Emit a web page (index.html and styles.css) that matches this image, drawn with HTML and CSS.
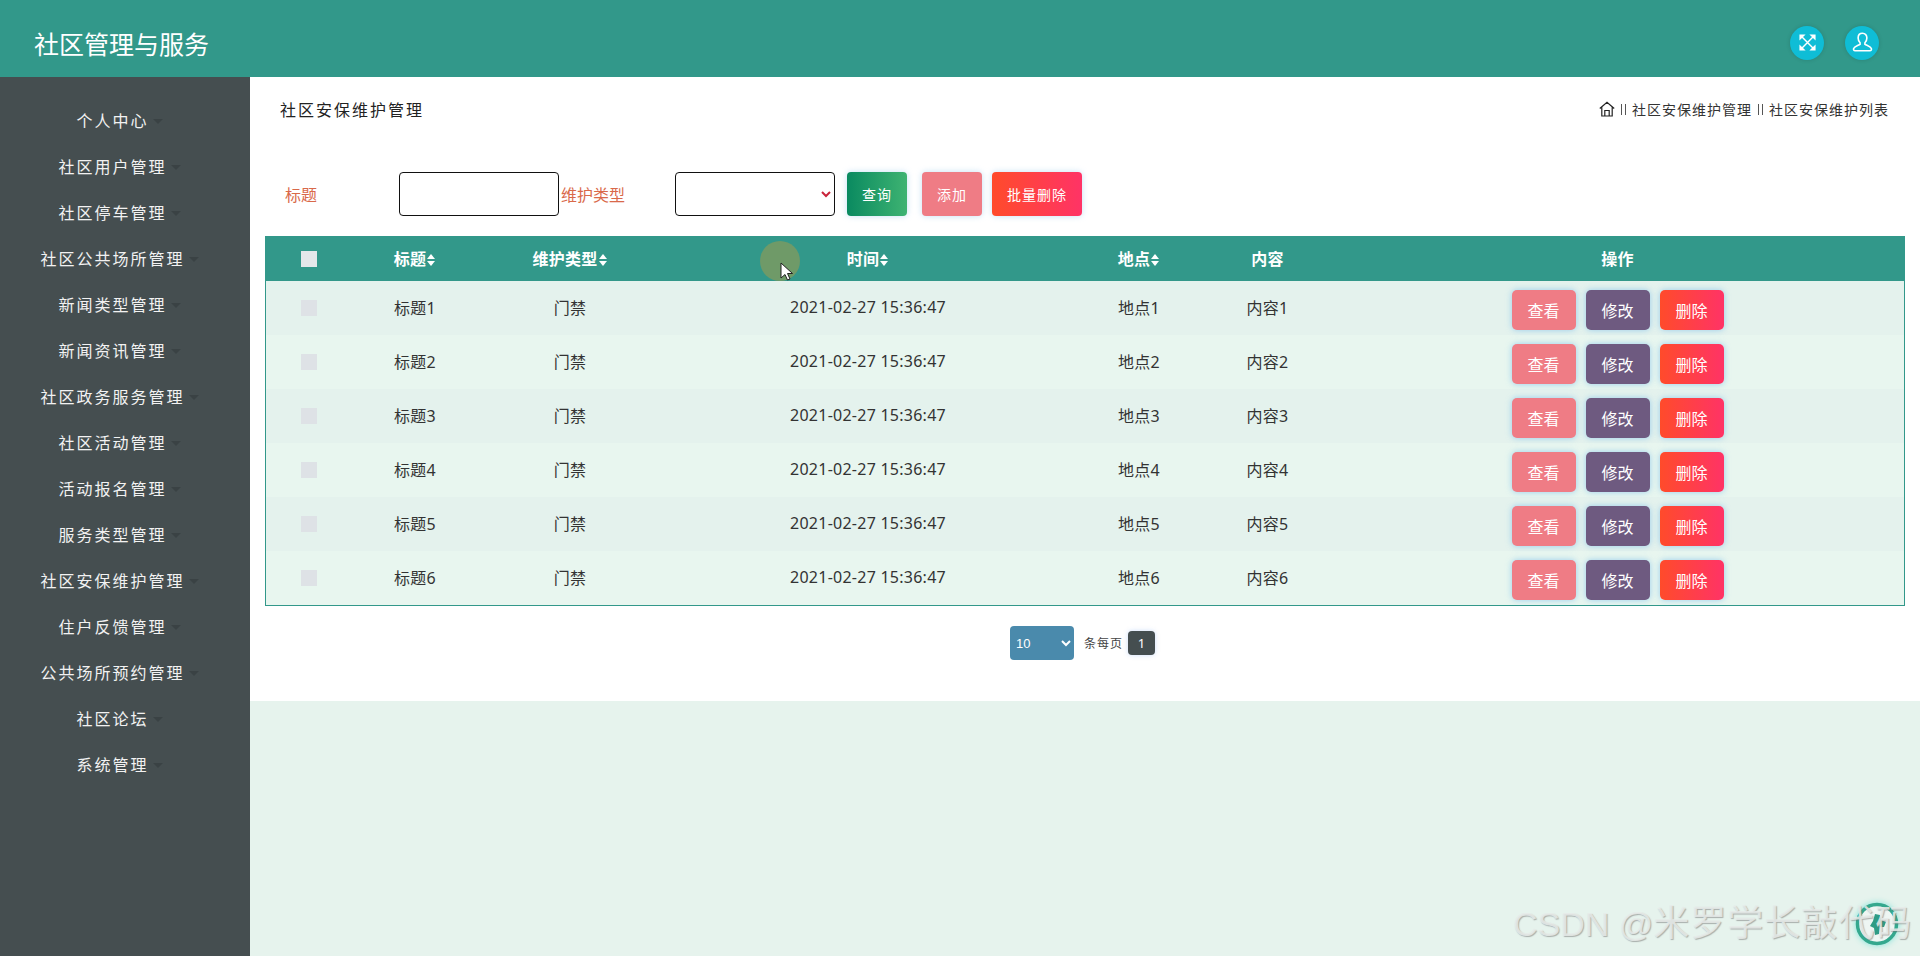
FILE: index.html
```html
<!DOCTYPE html>
<html lang="zh-CN">

<head>
    <meta charset="UTF-8">
    <meta name="viewport" content="width=device-width, initial-scale=1.0">
    <title>社区管理与服务</title>
    <link rel="stylesheet" href="styles.css">
</head>

<body>
    <header class="topbar">
        <div class="logo">社区管理与服务</div>
        <div class="top-icons">
            <span class="round-icon">
                <svg width="19" height="19" viewBox="0 0 20 20" fill="none" stroke="#fff" stroke-width="1.500">
                    <path d="M4 4l12 12M16 4L4 16" />
                    <path d="M1.500 1.500h6.500L1.500 8zM18.500 1.500V8L12 1.500zM1.500 18.500V12L8 18.500zM18.500 18.500H12L18.500 12z" fill="#fff" stroke="none" />
                </svg>
            </span>
            <span class="round-icon">
                <svg width="23" height="23" viewBox="0 0 20 20" fill="none" stroke="#fff" stroke-width="1.400">
                    <path d="M10 2c-2.400 0-3.800 1.700-3.800 4 0 1.700.7 3.200 1.700 4.200v1.300c-1.600 1-5 1.900-5.600 3.700-.3 1 .2 2 1.300 2h12.800c1.100 0 1.600-1 1.300-2-.6-1.800-4-2.700-5.600-3.700v-1.300c1-1 1.700-2.500 1.700-4.200 0-2.300-1.400-4-3.800-4z" />
                </svg>
            </span>
        </div>
    </header>

    <div class="layout">
        <!-- 左侧菜单 -->
        <nav class="sidebar">
            <a class="menu-item">个人中心</a>
            <a class="menu-item">社区用户管理</a>
            <a class="menu-item">社区停车管理</a>
            <a class="menu-item">社区公共场所管理</a>
            <a class="menu-item">新闻类型管理</a>
            <a class="menu-item">新闻资讯管理</a>
            <a class="menu-item">社区政务服务管理</a>
            <a class="menu-item">社区活动管理</a>
            <a class="menu-item">活动报名管理</a>
            <a class="menu-item">服务类型管理</a>
            <a class="menu-item">社区安保维护管理</a>
            <a class="menu-item">住户反馈管理</a>
            <a class="menu-item">公共场所预约管理</a>
            <a class="menu-item">社区论坛</a>
            <a class="menu-item">系统管理</a>
        </nav>

        <main class="main">
            <section class="panel">
                <div class="title-bar">
                    <span class="page-title">社区安保维护管理</span>
                    <div class="crumbs">
                        <svg width="16" height="16" viewBox="0 0 16 16" fill="none" stroke="#222" stroke-width="1.200">
                            <path d="M.8 7.500L8 1.200l7.200 6.300M2.800 6.200V15h10.400V6.200M5.800 15V9.500h4.400V15" />
                        </svg>
                        <span class="crumb-sep"></span>
                        <span>社区安保维护管理</span>
                        <span class="crumb-sep"></span>
                        <span>社区安保维护列表</span>
                    </div>
                </div>

                <!-- 搜索 -->
                <form class="search-row">
                    <label class="search-label">标题</label>
                    <input class="search-input" type="text">
                    <label class="search-label second">维护类型</label>
                    <select class="search-input search-select">
                        <option></option>
                    </select>
                    <button type="button" class="btn btn-search">查询</button>
                    <button type="button" class="btn btn-pink">添加</button>
                    <button type="button" class="btn btn-red btn-wide">批量删除</button>
                </form>

                <div class="table-wrap">
                    <table class="data-table">
                        <colgroup>
                            <col class="col-check">
                            <col class="col-title">
                            <col class="col-type">
                            <col class="col-time">
                            <col class="col-place">
                            <col class="col-content">
                            <col>
                        </colgroup>
                        <thead>
                            <tr>
                                <th><span class="check check-head"></span></th>
                                <th>标题<span class="sort"></span></th>
                                <th>维护类型<span class="sort"></span></th>
                                <th>时间<span class="sort"></span></th>
                                <th>地点<span class="sort"></span></th>
                                <th>内容</th>
                                <th>操作</th>
                            </tr>
                        </thead>
                        <tbody>
                            <tr>
                                <td><span class="check"></span></td>
                                <td>标题1</td>
                                <td>门禁</td>
                                <td>2021-02-27 15:36:47</td>
                                <td>地点1</td>
                                <td>内容1</td>
                                <td class="actions"><button class="act act-view">查看</button><button class="act act-edit">修改</button><button class="act act-del">删除</button></td>
                            </tr>
                            <tr>
                                <td><span class="check"></span></td>
                                <td>标题2</td>
                                <td>门禁</td>
                                <td>2021-02-27 15:36:47</td>
                                <td>地点2</td>
                                <td>内容2</td>
                                <td class="actions"><button class="act act-view">查看</button><button class="act act-edit">修改</button><button class="act act-del">删除</button></td>
                            </tr>
                            <tr>
                                <td><span class="check"></span></td>
                                <td>标题3</td>
                                <td>门禁</td>
                                <td>2021-02-27 15:36:47</td>
                                <td>地点3</td>
                                <td>内容3</td>
                                <td class="actions"><button class="act act-view">查看</button><button class="act act-edit">修改</button><button class="act act-del">删除</button></td>
                            </tr>
                            <tr>
                                <td><span class="check"></span></td>
                                <td>标题4</td>
                                <td>门禁</td>
                                <td>2021-02-27 15:36:47</td>
                                <td>地点4</td>
                                <td>内容4</td>
                                <td class="actions"><button class="act act-view">查看</button><button class="act act-edit">修改</button><button class="act act-del">删除</button></td>
                            </tr>
                            <tr>
                                <td><span class="check"></span></td>
                                <td>标题5</td>
                                <td>门禁</td>
                                <td>2021-02-27 15:36:47</td>
                                <td>地点5</td>
                                <td>内容5</td>
                                <td class="actions"><button class="act act-view">查看</button><button class="act act-edit">修改</button><button class="act act-del">删除</button></td>
                            </tr>
                            <tr>
                                <td><span class="check"></span></td>
                                <td>标题6</td>
                                <td>门禁</td>
                                <td>2021-02-27 15:36:47</td>
                                <td>地点6</td>
                                <td>内容6</td>
                                <td class="actions"><button class="act act-view">查看</button><button class="act act-edit">修改</button><button class="act act-del">删除</button></td>
                            </tr>
                        </tbody>
                    </table>
                </div>

                <!-- 分页 -->
                <div class="pager">
                    <select class="page-size">
                        <option>10</option>
                    </select>
                    <span class="page-text">条每页</span>
                    <span class="page-num">1</span>
                </div>
            </section>
        </main>
    </div>

    <!-- 录屏的鼠标高亮 -->
    <div class="cursor-dot"></div>
    <svg class="cursor-arrow" width="13" height="19" viewBox="0 0 13 19">
        <path d="M1 1v15l4-3.500 2.500 5.500 2.500-1-2.500-5.500H12.500z" fill="#fff" stroke="#222" stroke-width="1" />
    </svg>

    <svg class="float-help" width="46" height="46" viewBox="0 0 46 46">
        <circle cx="23" cy="23" r="19.500" fill="#eef6f3" stroke="#35a88e" stroke-width="3.500" />
        <path d="M21 13l5 1 1 5 5 2-2 5-4 0-1 7-4 1-1-7-4-2 3-5z" fill="#2f9c84" />
    </svg>
    <div class="watermark">CSDN @<span class="watermark-cjk">米罗学长敲代码</span></div>
</body>

</html>
```

FILE: styles.css
```css
* {
    box-sizing: border-box;
}

body {
    margin: 0;
    height: 100vh;
    overflow: hidden;
    background: #e6f3ed;
    color: #333;
    font-family: "Noto Sans", "Noto Sans CJK SC", sans-serif;
    font-size: 16px;
}

/* 顶部 */
.topbar {
    height: 77px;
    background: #32988a;
    display: flex;
    align-items: center;
    justify-content: space-between;
    padding: 10px 41px 0 34px;
    color: #fff;
}

.logo {
    font-size: 25px;
    line-height: 34px;
}

.top-icons {
    display: flex;
    gap: 21px;
    margin-top: -2px;
}

.round-icon {
    width: 34px;
    height: 34px;
    border-radius: 50%;
    background: #0fbdd6;
    box-shadow: 0 0 4px rgba(0, 0, 0, 0.15);
    display: flex;
    align-items: center;
    justify-content: center;
}

.layout {
    display: flex;
    height: 879px;
}

/* 菜单 */
.sidebar {
    width: 250px;
    flex: none;
    background: #454e50;
    padding: 21px 11px 0 0;
}

.menu-item {
    display: block;
    height: 46px;
    line-height: 46px;
    text-align: center;
    color: #f2f2f2;
    letter-spacing: 2px;
}

.menu-item::after {
    content: "";
    display: inline-block;
    margin-left: 4px;
    vertical-align: 3px;
    border-top: 5px solid #3a4244;
    border-left: 5px solid transparent;
    border-right: 5px solid transparent;
}

.main {
    flex: 1;
}

.panel {
    background: #fff;
    height: 624px;
}

.title-bar {
    height: 64px;
    display: flex;
    align-items: center;
    justify-content: space-between;
    padding: 0 31px 0 30px;
}

.page-title {
    letter-spacing: 2px;
    color: #222;
}

.crumbs {
    display: flex;
    align-items: center;
    gap: 6px;
    font-size: 14px;
    letter-spacing: 1px;
    color: #333;
}

/* 两条竖线的分隔符 */
.crumb-sep {
    width: 5px;
    height: 11px;
    border-left: 1px solid #555;
    border-right: 1px solid #555;
}

/* 搜索 */
.search-row {
    display: flex;
    align-items: center;
    height: 44px;
    margin: 31px 0 0 35px;
}

.search-label {
    width: 114px;
    color: #d9694a;
}

.search-label.second {
    margin-left: 2px;
}

.search-input {
    width: 160px;
    height: 44px;
    border: 1px solid #111;
    border-radius: 4px;
    background: #fff;
}

.search-select {
    color: #c9243a;
}

.btn {
    width: 60px;
    height: 44px;
    border: none;
    border-radius: 4px;
    margin-left: 10px;
    color: #fff;
    font-family: inherit;
    font-size: 14px;
    letter-spacing: 1px;
    box-shadow: 0 0 6px rgba(110, 180, 230, 0.4);
}

.btn-search {
    margin-left: 12px;
    margin-right: 5px;
    background: linear-gradient(90deg, #0a8a60, #3eb372);
}

.btn-pink {
    background: #ef7c85;
}

.btn-red {
    background: linear-gradient(90deg, #ff4b2b, #ff3366);
}

.btn-wide {
    width: 90px;
}

/* 表格 */
.table-wrap {
    margin: 20px 15px 0;
    border: 1px solid #32988a;
    border-top: none;
}

.data-table {
    width: 100%;
    table-layout: fixed;
    border-collapse: collapse;
    text-align: center;
    letter-spacing: 0.25px;
}

.col-check {
    width: 86px;
}

.col-title {
    width: 126px;
}

.col-type {
    width: 184px;
}

.col-time {
    width: 412px;
}

.col-place {
    width: 130px;
}

.col-content {
    width: 127px;
}

.data-table th {
    height: 45px;
    padding: 0 0 2px;
    background: #32988a;
    color: #fff;
    font-weight: 700;
}

.data-table td {
    height: 54px;
    padding: 0 0 2px;
    background: #e4f2ed;
}

.data-table tbody tr:nth-child(even) td {
    background: #e8f6ef;
}

.data-table td.actions {
    padding: 3px 0 0;
    white-space: nowrap;
}

.check {
    display: block;
    width: 16px;
    height: 16px;
    margin: 2px auto 0;
    background: #dee2e6;
}

.check-head {
    background: #e4e8ea;
}

/* 排序箭头 */
.sort {
    display: inline-block;
    width: 9px;
    height: 12px;
    margin-left: 1px;
    vertical-align: -1px;
    position: relative;
}

.sort::before,
.sort::after {
    content: "";
    position: absolute;
    left: 0;
    border-left: 4.500px solid transparent;
    border-right: 4.500px solid transparent;
}

.sort::before {
    top: 0;
    border-bottom: 5.500px solid #fff;
}

.sort::after {
    bottom: 0;
    border-top: 5.500px solid #fff;
}

.act {
    width: 64px;
    height: 40px;
    border: none;
    border-radius: 5px;
    margin: 0 5px;
    padding: 0;
    color: #fff;
    font-family: inherit;
    font-size: 16px;
    box-shadow: 0 0 6px rgba(100, 180, 235, 0.6);
}

.act-view {
    background: #ef7c85;
}

.act-edit {
    background: #6e5a80;
}

.act-del {
    background: linear-gradient(90deg, #ff4b2b, #ff3366);
}

/* 分页 */
.pager {
    display: flex;
    align-items: center;
    margin: 20px 0 0 760px;
    height: 34px;
}

.page-size {
    width: 64px;
    height: 34px;
    border: none;
    border-radius: 4px;
    background: #4a8aac;
    color: #fff;
    font-size: 13px;
    padding-left: 2px;
}

.page-text {
    margin-left: 10px;
    font-size: 12px;
    letter-spacing: 1px;
    color: #444;
}

.page-num {
    width: 27px;
    height: 24px;
    margin-left: 5px;
    border-radius: 4px;
    background: #454e50;
    color: #fff;
    font-size: 13px;
    line-height: 24px;
    text-align: center;
    box-shadow: 0 0 5px rgba(110, 160, 240, 0.35);
}

/* 覆盖层 */
.cursor-dot {
    position: absolute;
    left: 760px;
    top: 241px;
    width: 40px;
    height: 40px;
    border-radius: 50%;
    background: #6f9a68;
}

.cursor-arrow {
    position: absolute;
    left: 780px;
    top: 262px;
}

.float-help {
    position: absolute;
    left: 1854px;
    top: 901px;
    filter: drop-shadow(0 0 3px #7fe3d8);
}

.watermark {
    position: absolute;
    left: 1513px;
    top: 900px;
    font-family: "Liberation Sans", "Noto Sans CJK SC", sans-serif;
    font-size: 34px;
    line-height: 48px;
    white-space: nowrap;
    color: rgba(232, 236, 234, 0.85);
    text-shadow: 1px 1px 1px rgba(110, 110, 110, 0.5);
}

.watermark-cjk {
    font-size: 36px;
    letter-spacing: 1px;
}
```
